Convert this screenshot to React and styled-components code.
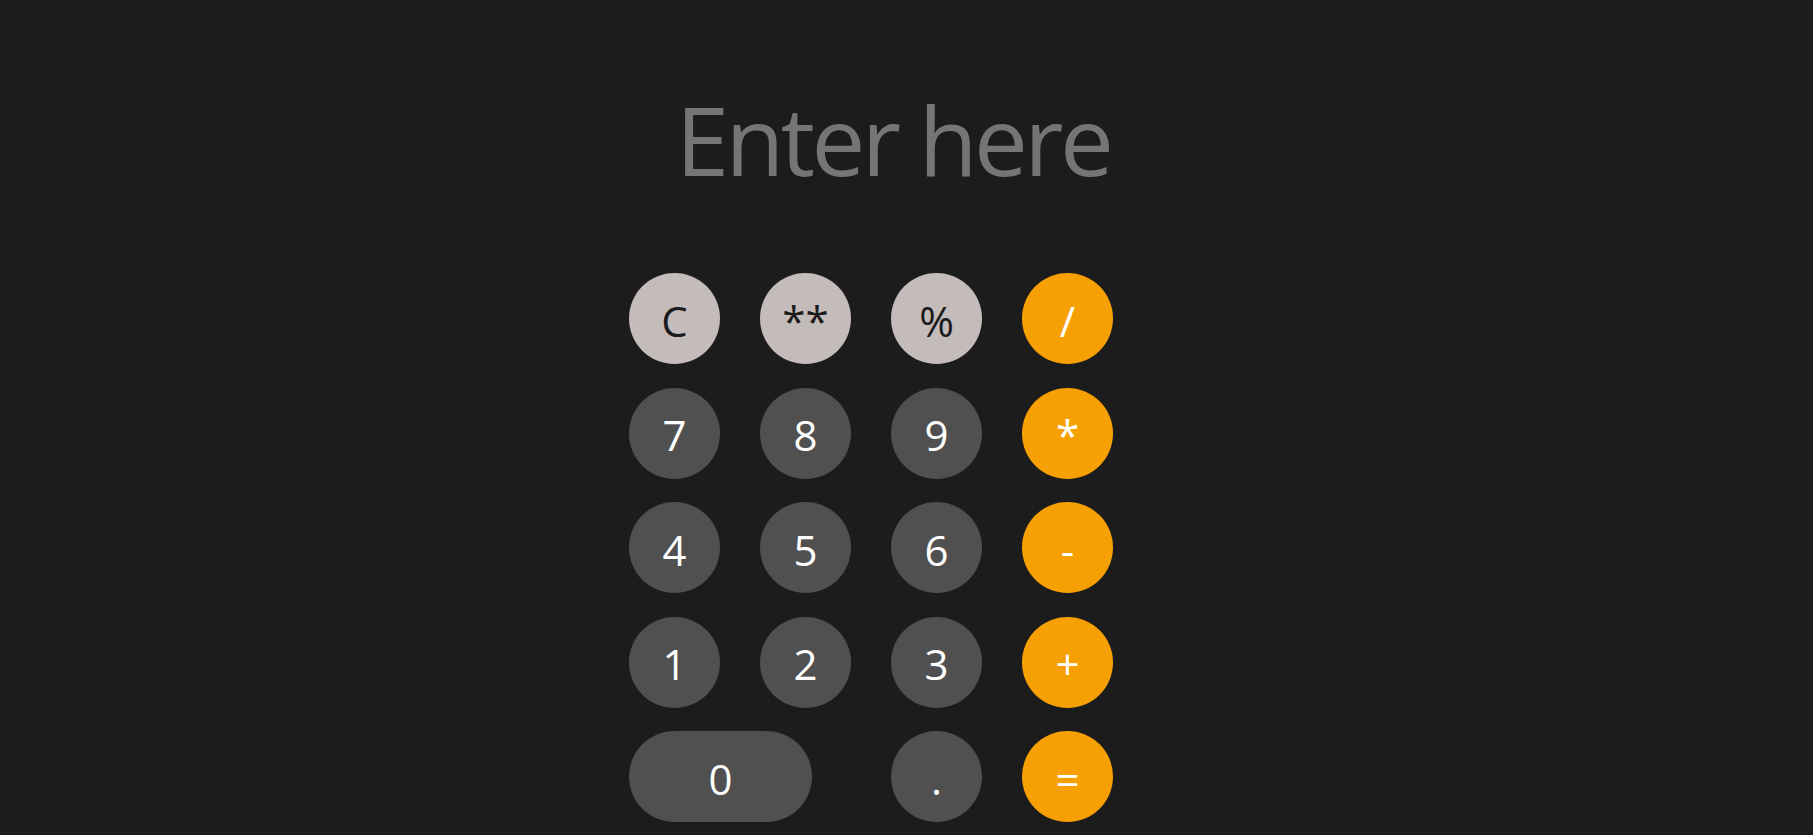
import styled, { createGlobalStyle } from "styled-components";

const GlobalStyle = createGlobalStyle`
  html, body {
    margin: 0;
    padding: 0;
    background-color: #1c1c1c;
    font-family: "Open Sans", "Noto Sans", "DejaVu Sans", sans-serif;
  }
`;

const Page = styled.div`
  box-sizing: border-box;
  min-height: 100vh;
  display: flex;
  flex-direction: column;
  align-items: center;
  padding-right: 31px;
  overflow: hidden;
`;

const Display = styled.div`
  margin-top: 91px;
  margin-left: 4px;
  height: 96px;
  font-size: 96px;
  line-height: 96px;
  letter-spacing: -3.6px;
  color: #757575;
  white-space: nowrap;
`;

const Keypad = styled.div`
  margin-top: 86px;
  display: grid;
  grid-template-columns: repeat(4, 131px);
  grid-auto-rows: 91px;
  row-gap: 23.5px;
`;

const colors = {
  light: { bg: "#c4bcba", fg: "#1b1b1b" },
  dark: { bg: "#505050", fg: "#ffffff" },
  orange: { bg: "#f7a004", fg: "#ffffff" },
};

const Key = styled.button`
  box-sizing: border-box;
  width: ${({ $wide }) => ($wide ? "183px" : "91px")};
  height: 91px;
  grid-column: ${({ $wide }) => ($wide ? "span 2" : "auto")};
  justify-self: start;
  border: none;
  border-radius: 46px;
  padding: 4px 0 0;
  background-color: ${({ $kind }) => colors[$kind].bg};
  color: ${({ $kind }) => colors[$kind].fg};
  font-family: inherit;
  font-size: 42px;
  line-height: 1;
  cursor: pointer;
`;

const keys = [
  ["C", "light"],
  ["**", "light"],
  ["%", "light"],
  ["/", "orange"],
  ["7", "dark"],
  ["8", "dark"],
  ["9", "dark"],
  ["*", "orange"],
  ["4", "dark"],
  ["5", "dark"],
  ["6", "dark"],
  ["-", "orange"],
  ["1", "dark"],
  ["2", "dark"],
  ["3", "dark"],
  ["+", "orange"],
  ["0", "dark", true],
  [".", "dark"],
  ["=", "orange"],
];

const App = () => {
  return (
    <>
      <GlobalStyle />
      <Page>
        <Display>Enter here</Display>
        <Keypad>
          {keys.map(([label, kind, wide]) => (
            <Key key={label} type="button" $kind={kind} $wide={wide}>
              {label}
            </Key>
          ))}
        </Keypad>
      </Page>
    </>
  );
};

export default App;
